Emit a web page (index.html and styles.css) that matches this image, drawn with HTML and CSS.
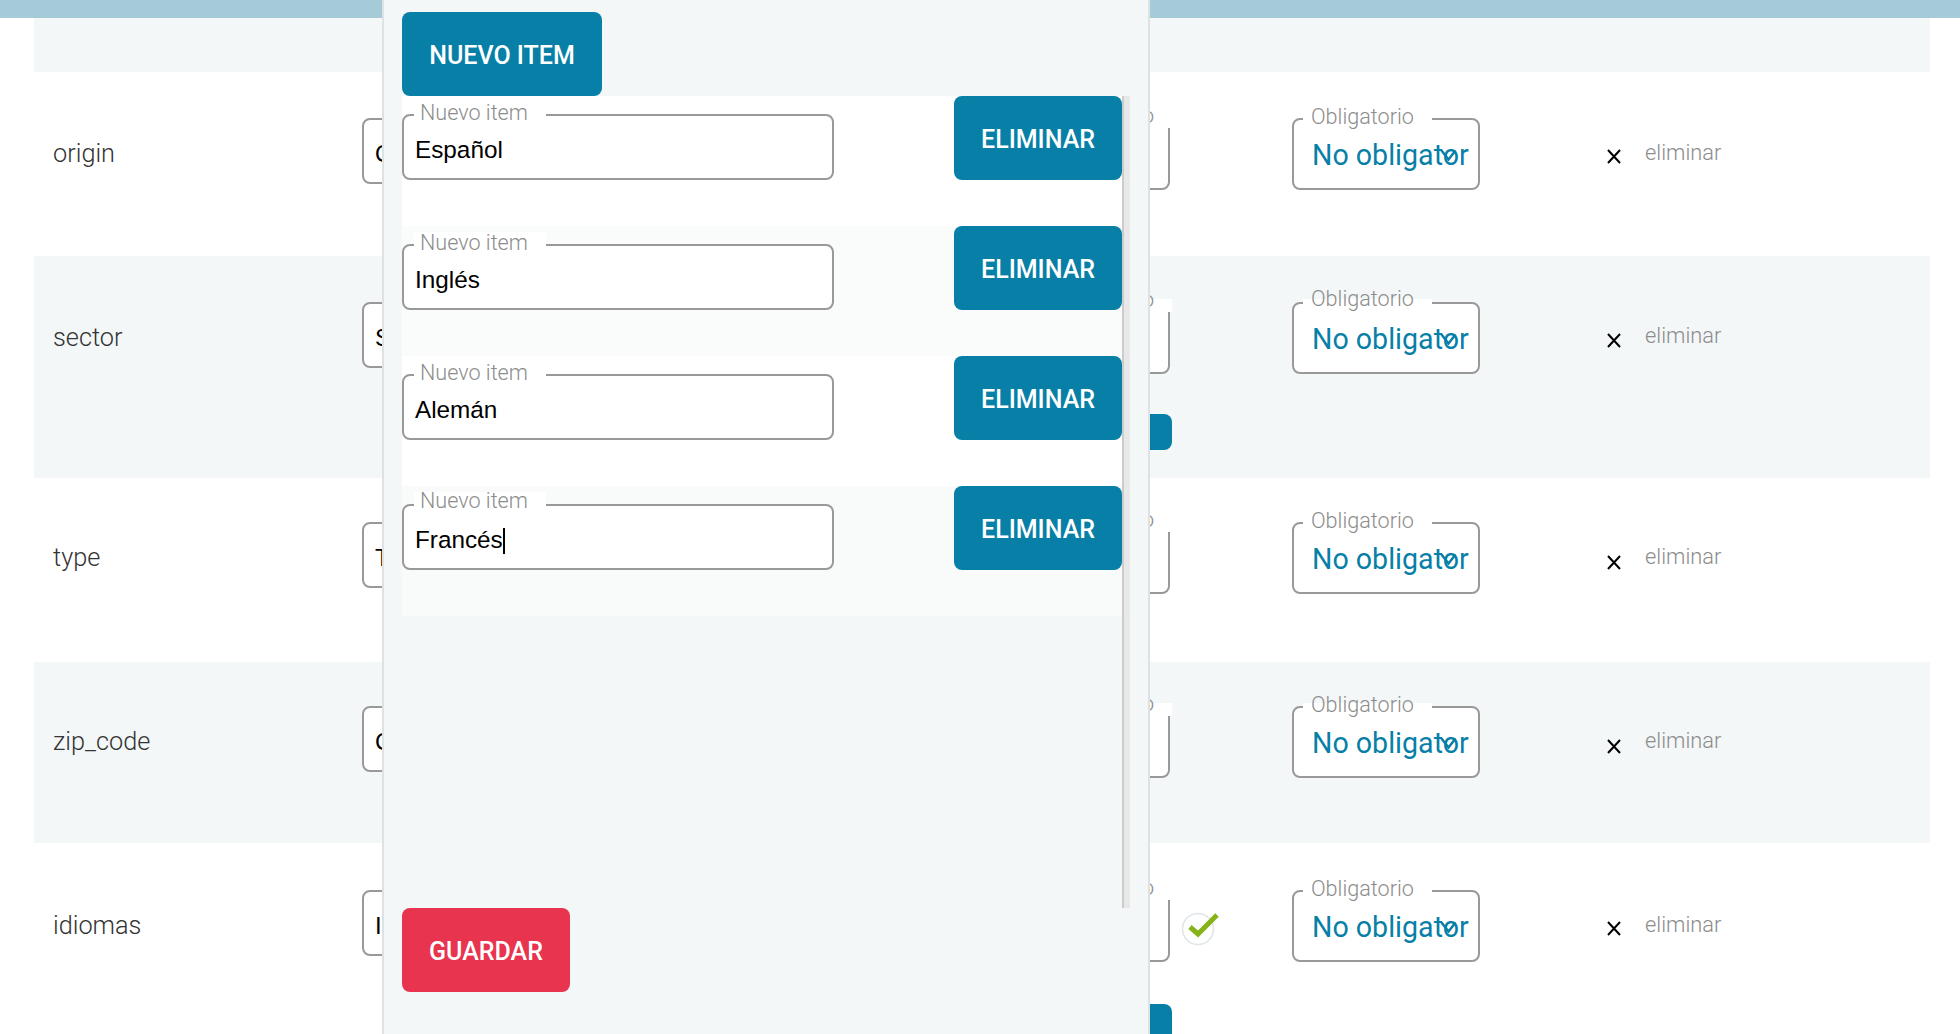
FILE: index.html
```html
<!DOCTYPE html>
<html lang="es">
<head>
<meta charset="utf-8">
<title>Campos</title>
<link rel="stylesheet" href="styles.css">
</head>
<body>
<div class="topbar"></div>
<main class="table">
  <div class="band"></div>

  <section class="row row-a">
    <div class="name">origin</div>
    <div class="field field-left"><span class="letter">O</span></div>
    <div class="col-mid">
      <div class="field field-mid"><span class="legend legend-mid">o</span></div>
    </div>
    <div class="col-check"></div>
    <div class="field field-select">
      <span class="legend legend-ob">Obligatorio</span>
      <span class="select-value">No obligator</span>
      <svg class="chevron" viewBox="0 0 17 13"><path d="M1.5 1.5l7 9 7-9"/></svg>
    </div>
    <div class="actions">
      <svg class="cross" viewBox="0 0 14 15"><path d="M1 1l12 13M13 1L1 14"/></svg>
      <span class="remove">eliminar</span>
    </div>
  </section>

  <section class="row row-b">
    <div class="name">sector</div>
    <div class="field field-left"><span class="letter">S</span></div>
    <div class="col-mid">
      <div class="field field-mid"><span class="legend legend-mid">o</span></div>
      <div class="peek peek-short"></div>
    </div>
    <div class="col-check"></div>
    <div class="field field-select">
      <span class="legend legend-ob">Obligatorio</span>
      <span class="select-value">No obligator</span>
      <svg class="chevron" viewBox="0 0 17 13"><path d="M1.5 1.5l7 9 7-9"/></svg>
    </div>
    <div class="actions">
      <svg class="cross" viewBox="0 0 14 15"><path d="M1 1l12 13M13 1L1 14"/></svg>
      <span class="remove">eliminar</span>
    </div>
  </section>

  <section class="row row-c">
    <div class="name">type</div>
    <div class="field field-left"><span class="letter">T</span></div>
    <div class="col-mid">
      <div class="field field-mid"><span class="legend legend-mid">o</span></div>
    </div>
    <div class="col-check"></div>
    <div class="field field-select">
      <span class="legend legend-ob">Obligatorio</span>
      <span class="select-value">No obligator</span>
      <svg class="chevron" viewBox="0 0 17 13"><path d="M1.5 1.5l7 9 7-9"/></svg>
    </div>
    <div class="actions">
      <svg class="cross" viewBox="0 0 14 15"><path d="M1 1l12 13M13 1L1 14"/></svg>
      <span class="remove">eliminar</span>
    </div>
  </section>

  <section class="row row-d">
    <div class="name">zip_code</div>
    <div class="field field-left"><span class="letter">C</span></div>
    <div class="col-mid">
      <div class="field field-mid"><span class="legend legend-mid">o</span></div>
    </div>
    <div class="col-check"></div>
    <div class="field field-select">
      <span class="legend legend-ob">Obligatorio</span>
      <span class="select-value">No obligator</span>
      <svg class="chevron" viewBox="0 0 17 13"><path d="M1.5 1.5l7 9 7-9"/></svg>
    </div>
    <div class="actions">
      <svg class="cross" viewBox="0 0 14 15"><path d="M1 1l12 13M13 1L1 14"/></svg>
      <span class="remove">eliminar</span>
    </div>
  </section>

  <section class="row row-e">
    <div class="name">idiomas</div>
    <div class="field field-left"><span class="letter">I</span></div>
    <div class="col-mid">
      <div class="field field-mid"><span class="legend legend-mid">o</span></div>
      <div class="peek peek-tall"></div>
    </div>
    <div class="col-check">
      <svg class="check" viewBox="0 0 40 40"><circle cx="17" cy="21" r="15.5"/><path d="M9 19l8 7 19-19"/></svg>
    </div>
    <div class="field field-select">
      <span class="legend legend-ob">Obligatorio</span>
      <span class="select-value">No obligator</span>
      <svg class="chevron" viewBox="0 0 17 13"><path d="M1.5 1.5l7 9 7-9"/></svg>
    </div>
    <div class="actions">
      <svg class="cross" viewBox="0 0 14 15"><path d="M1 1l12 13M13 1L1 14"/></svg>
      <span class="remove">eliminar</span>
    </div>
  </section>
</main>

<aside class="panel">
  <header class="panel-head">
    <button class="btn btn-blue btn-new" type="button">NUEVO ITEM</button>
  </header>
  <div class="panel-body">
    <div class="items">
      <div class="item">
        <div class="field field-item">
          <span class="legend legend-item">Nuevo item</span>
          <span class="item-value">Español</span>
        </div>
        <button class="btn btn-blue btn-del" type="button">ELIMINAR</button>
      </div>
      <div class="item">
        <div class="field field-item">
          <span class="legend legend-item">Nuevo item</span>
          <span class="item-value">Inglés</span>
        </div>
        <button class="btn btn-blue btn-del" type="button">ELIMINAR</button>
      </div>
      <div class="item">
        <div class="field field-item">
          <span class="legend legend-item">Nuevo item</span>
          <span class="item-value">Alemán</span>
        </div>
        <button class="btn btn-blue btn-del" type="button">ELIMINAR</button>
      </div>
      <div class="item">
        <div class="field field-item">
          <span class="legend legend-item legend-focus">Nuevo item</span>
          <span class="item-value">Francés<i class="caret"></i></span>
        </div>
        <button class="btn btn-blue btn-del" type="button">ELIMINAR</button>
      </div>
    </div>
    <div class="scrollbar"></div>
  </div>
  <footer class="panel-foot">
    <button class="btn btn-red" type="button">GUARDAR</button>
  </footer>
</aside>
</body>
</html>
```

FILE: styles.css
```css
* { box-sizing: border-box; }

html, body {
  margin: 0;
  height: 1034px;
  overflow: hidden;
  background: #fff;
  font-family: Roboto, "Liberation Sans", sans-serif;
}

.topbar { height: 18px; background: #a5cbd9; }

.table { margin: 0 30px 0 34px; }
.band { height: 54px; background: #f3f7f8; }

.row {
  display: grid;
  grid-template-columns: 309px 538px 270px 122px 188px auto;
  align-items: start;
  padding-left: 19px;
}
.row-a { height: 184px; padding-top: 46px; background: #fff; }
.row-b { height: 222px; padding-top: 46px; background: #f3f7f8; }
.row-c { height: 184px; padding-top: 44px; background: #fff; }
.row-d { height: 181px; padding-top: 44px; background: #f3f7f8; }
.row-e { height: 191px; padding-top: 47px; background: #fff; }

.name {
  height: 71px;
  line-height: 71px;
  font-size: 25.3px;
  font-weight: 300;
  color: #333;
}

.field {
  position: relative;
  background: #fff;
  border: 2px solid #999;
  border-radius: 8px;
}

.legend {
  position: absolute;
  background: #fff;
  font-size: 21.6px;
  font-weight: 300;
  color: #8c8c8c;
  white-space: nowrap;
}

.field-left { height: 66px; width: 240px; padding-left: 11px; }
.letter {
  font-family: "Liberation Sans", sans-serif;
  font-size: 24px;
  line-height: 68px;
  color: #000;
}

.col-mid { display: flex; flex-direction: column; }
.field-mid { height: 72px; width: 270px; }
.legend-mid {
  top: -5px;
  left: 0;
  right: -4px;
  height: 13px;
  line-height: 2px;
  padding-right: 18px;
  text-align: right;
}

.peek { width: 272px; background: #077fa7; border-radius: 8px; margin-top: 40px; }
.peek-short { height: 36px; }
.peek-tall { height: 60px; margin-top: 42px; }

.col-check { padding: 18px 0 0 11px; }
.check { display: block; width: 40px; height: 40px; }
.check circle { fill: #fff; stroke: #dfe6ea; stroke-width: 1.6; }
.check path { fill: none; stroke: #86b31a; stroke-width: 5; }

.field-select {
  height: 72px;
  width: 188px;
  padding-left: 18px;
}
.legend-ob {
  top: -5px;
  left: 9px;
  height: 13px;
  padding: 0 18px 0 8px;
  line-height: 4px;
}
.row-b .legend-ob { line-height: 0; }
.select-value {
  display: block;
  font-size: 28.6px;
  line-height: 70px;
  color: #077fa7;
  white-space: nowrap;
}
.chevron {
  position: absolute;
  top: 29px;
  left: 146px;
  width: 17px;
  height: 13px;
  fill: none;
  stroke: #077fa7;
  stroke-width: 2.4;
}

.actions {
  display: flex;
  align-items: flex-start;
  gap: 24px;
  padding-left: 127px;
}
.cross {
  width: 14px;
  height: 15px;
  margin-top: 31px;
  fill: none;
  stroke: #000;
  stroke-width: 2;
  flex: none;
}
.row-c .cross, .row-d .cross { margin-top: 33px; }
.remove {
  font-size: 21.8px;
  font-weight: 300;
  line-height: 70px;
  color: #8c8c8c;
}
.row-b .remove { line-height: 67px; }

.panel {
  position: absolute;
  top: 0;
  left: 382px;
  width: 768px;
  height: 1034px;
  display: flex;
  flex-direction: column;
  padding-left: 18px;
  background: #f3f7f8;
  border-left: 2px solid #dfe2e3;
  border-right: 2px solid #dfe2e3;
}
.panel-head { height: 96px; padding-top: 12px; }
.panel-body { height: 812px; display: flex; }
.items { width: 720px; }
.scrollbar { width: 8px; background: #e8e8e8; border-left: 2px solid #ccc; }

.item {
  height: 130px;
  display: flex;
  justify-content: space-between;
  align-items: flex-start;
  background: #fff;
}
.item:nth-child(even) { background: #fafbfb; }
.item:last-child { background: #f9fbfb; }

.field-item {
  width: 432px;
  height: 66px;
  margin-top: 18px;
  padding-left: 11px;
}
.legend-item {
  top: -14px;
  left: 10px;
  height: 14px;
  padding: 0 18px 0 6px;
  line-height: 22px;
}
.legend-focus { line-height: 18px; }
.item-value {
  display: block;
  font-family: "Liberation Sans", sans-serif;
  font-size: 24.3px;
  line-height: 68px;
  color: #000;
}
.caret {
  display: inline-block;
  width: 2px;
  height: 26px;
  margin-left: 0;
  vertical-align: -6px;
  background: #000;
}

.btn {
  display: block;
  height: 84px;
  padding: 2px 0 0;
  border: 0;
  border-radius: 8px;
  color: #fff;
  font-family: Roboto, "Liberation Sans", sans-serif;
  font-size: 25px;
  font-weight: 500;
}
.btn-blue { background: #077fa7; }
.btn-red { background: #e8344e; width: 168px; }
.btn-new { width: 200px; }
.btn-del { width: 168px; }
```
